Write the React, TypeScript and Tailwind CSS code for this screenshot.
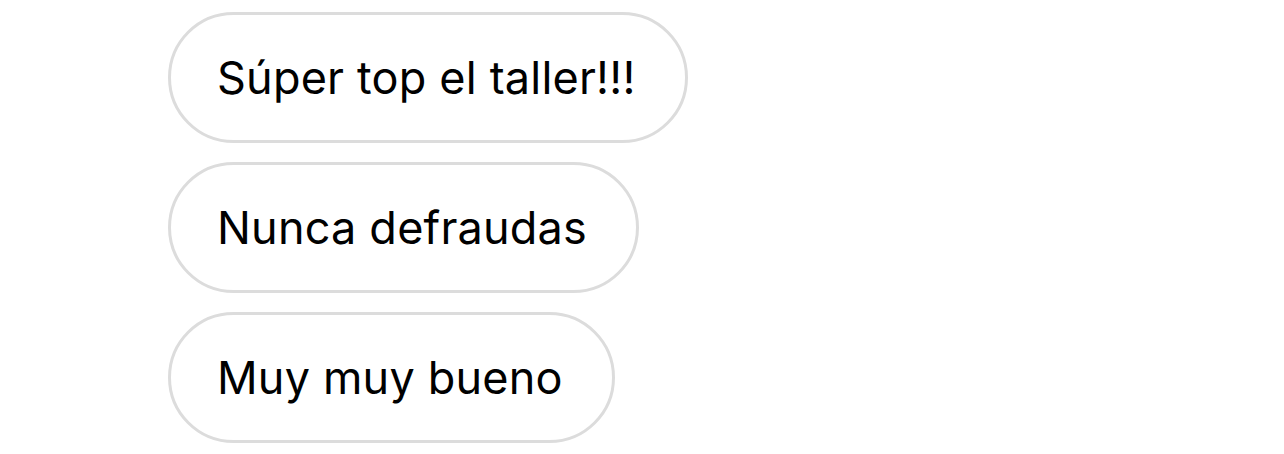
const messages = ["Súper top el taller!!!", "Nunca defraudas", "Muy muy bueno"];

function Bubble({ text }: { text: string }) {
  return (
    <div className="flex h-[131px] items-center rounded-full border-[3px] border-[#dcdcdc] bg-white pl-[46px] pr-[49px]">
      <span className="text-[45px] leading-none tracking-[0.2px] text-black">{text}</span>
    </div>
  );
}

export default function App() {
  return (
    <div
      className="flex h-[454px] w-[1284px] flex-col items-start gap-[19px] bg-white pl-[168px] pt-[12px]"
      style={{ fontFamily: "Inter, 'Noto Sans', sans-serif" }}
    >
      {messages.map((message) => (
        <Bubble key={message} text={message} />
      ))}
    </div>
  );
}
